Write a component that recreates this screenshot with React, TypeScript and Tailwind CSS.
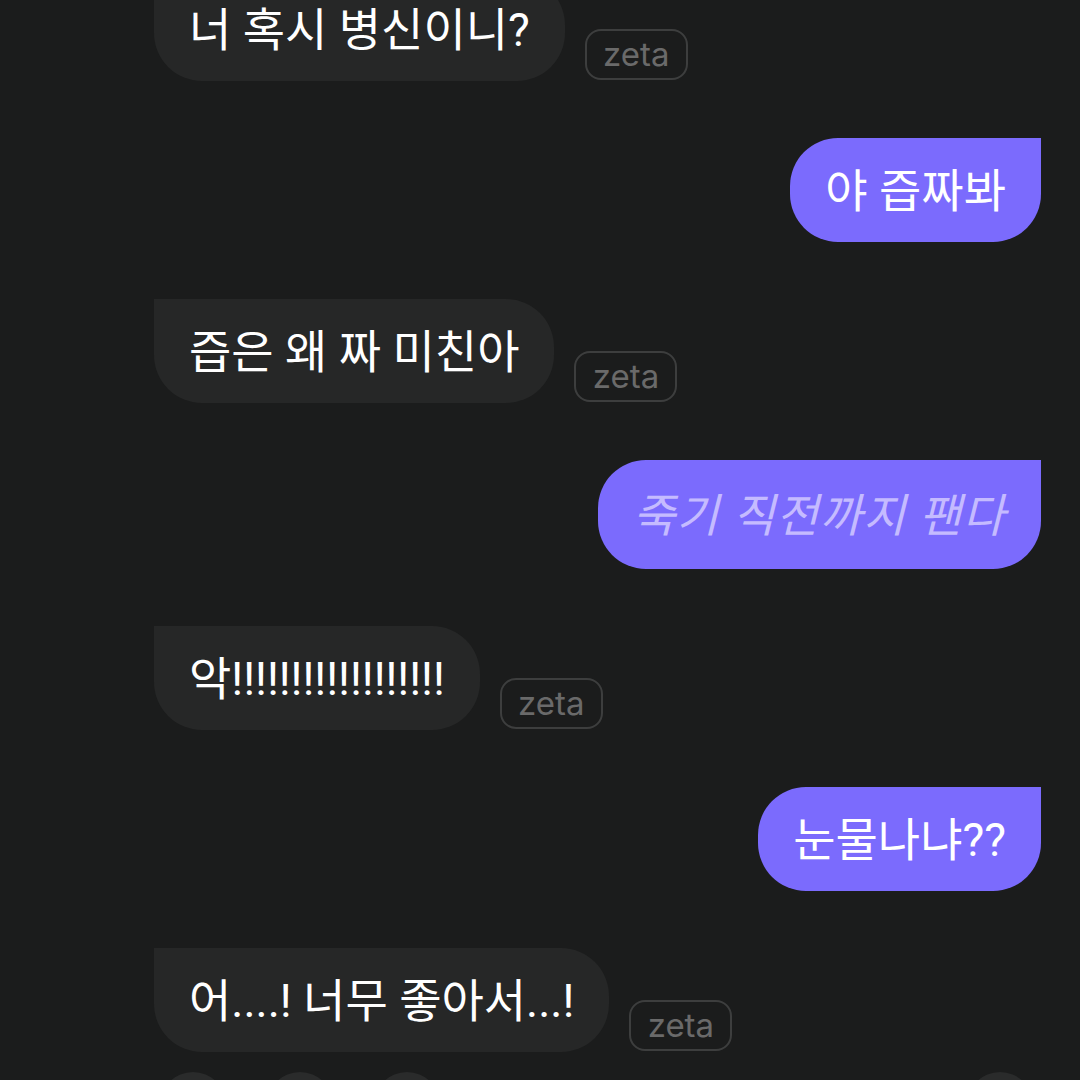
const font = { fontFamily: 'Roboto, "Noto Sans CJK KR", sans-serif' };

function Zeta() {
  return (
    <div
      className="mb-[1px] flex h-[51px] w-[103px] shrink-0 items-center justify-center rounded-[16px] border-2 border-[#3d3e3e] text-[33px] leading-none text-[#6a6a6a]"
      style={{ fontFamily: 'Inter, "Noto Sans", sans-serif' }}
    >
      <span className="-mt-[1px]">zeta</span>
    </div>
  );
}

function Left({ text, className = '' }: { text: string; className?: string }) {
  return (
    <div className={`flex items-end gap-[20px] pl-[154px] ${className}`}>
      <div
        className="flex h-[104px] items-center rounded-[48px] rounded-tl-none bg-[#262727] px-[35px] pt-[2px] text-[46px] leading-none text-white"
        style={font}
      >
        {text}
      </div>
      <Zeta />
    </div>
  );
}

function Right({ text, italic = false }: { text: string; italic?: boolean }) {
  return (
    <div className="flex justify-end pr-[39px]">
      <div
        className={`flex items-center rounded-[48px] rounded-tr-none bg-[#7b6bfd] px-[35px] pt-[2px] text-[46px] leading-none ${
          italic ? 'h-[109px] italic tracking-[1.2px] text-[#c5bbff]' : 'h-[104px] text-white'
        }`}
        style={font}
      >
        {text}
      </div>
    </div>
  );
}

export default function App() {
  return (
    <main className="h-[1080px] w-[1080px] overflow-hidden bg-[#1b1c1c]">
      <div className="flex flex-col gap-[57px]">
        <Left text="너 혹시 병신이니?" className="-mt-[23px]" />
        <Right text="야 즙짜봐" />
        <Left text="즙은 왜 짜 미친아" />
        <Right text="죽기 직전까지 팬다" italic />
        <Left text="악!!!!!!!!!!!!!!!!!!" />
        <Right text="눈물나냐??" />
        <Left text="어....! 너무 좋아서...!" />
      </div>
      <div className="mt-[20px] flex items-start">
        <div className="ml-[160px] h-[66px] w-[66px] rounded-full bg-[#2a2b2b]" />
        <div className="ml-[41px] h-[66px] w-[66px] rounded-full bg-[#2a2b2b]" />
        <div className="ml-[41px] h-[66px] w-[66px] rounded-full bg-[#2a2b2b]" />
        <div className="ml-[527px] h-[66px] w-[66px] rounded-full bg-[#2a2b2b]" />
      </div>
    </main>
  );
}
